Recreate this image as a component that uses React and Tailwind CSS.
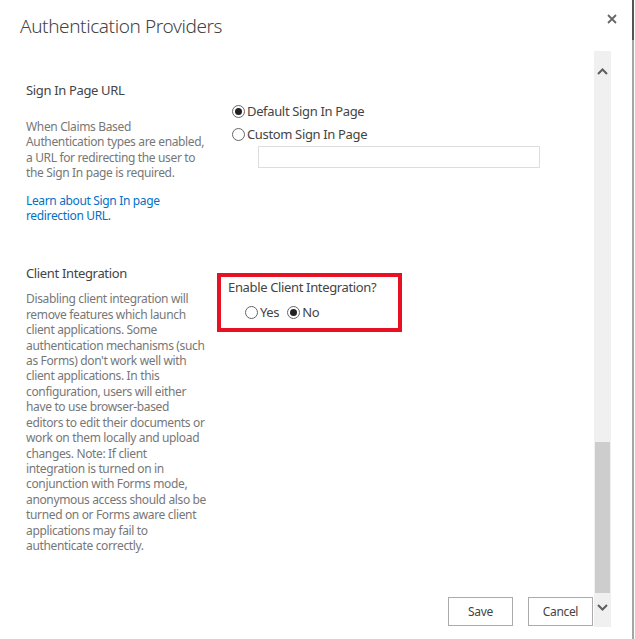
import React from "react";

const FONT = { fontFamily: '"Noto Sans", "Open Sans", Arial, sans-serif' };

function Radio({ checked }) {
  return (
    <span className="inline-flex h-[13px] w-[13px] shrink-0 items-center justify-center rounded-full border border-[#666] bg-white">
      {checked && <span className="h-[7px] w-[7px] rounded-full bg-[#222]" />}
    </span>
  );
}

function Chevron({ up }) {
  return (
    <svg width="11" height="7" viewBox="0 0 11 7">
      <path
        d={up ? "M1 6 L5.5 1.5 L10 6" : "M1 1 L5.5 5.5 L10 1"}
        fill="none"
        stroke="#5f5f5f"
        strokeWidth="2"
      />
    </svg>
  );
}

const signInLines = [
  "When Claims Based",
  "Authentication types are enabled,",
  "a URL for redirecting the user to",
  "the Sign In page is required.",
];

const clientLines = [
  "Disabling client integration will",
  "remove features which launch",
  "client applications. Some",
  "authentication mechanisms (such",
  "as Forms) don't work well with",
  "client applications. In this",
  "configuration, users will either",
  "have to use browser-based",
  "editors to edit their documents or",
  "work on them locally and upload",
  "changes. Note: If client",
  "integration is turned on in",
  "conjunction with Forms mode,",
  "anonymous access should also be",
  "turned on or Forms aware client",
  "applications may fail to",
  "authenticate correctly.",
];

export default function App() {
  return (
    <div className="flex h-[639px] w-[635px] overflow-hidden bg-white" style={FONT}>
      {/* Dialog */}
      <div className="flex w-[632px] flex-col">
        {/* Header */}
        <div className="flex h-[51px] items-start justify-between pl-5 pr-[15px]">
          <h1 className="pt-[12px] text-[19px] font-light leading-[28px] tracking-[-0.4px] text-[#444]">
            Authentication Providers
          </h1>
          <svg className="mt-[14px]" width="10" height="10" viewBox="0 0 10 10">
            <path d="M1 1 L9 9 M9 1 L1 9" stroke="#666" strokeWidth="1.8" />
          </svg>
        </div>

        {/* Body */}
        <div className="flex h-[576px] tracking-[-0.35px]">
          {/* Content */}
          <div className="flex w-[594px] flex-col">
            {/* Sign In Page URL */}
            <div className="mt-[30px] flex">
              <div className="w-[206px] shrink-0 whitespace-nowrap pl-[26px]">
                <div className="text-[13px] leading-[18px] text-[#444]">Sign In Page URL</div>
                <div className="mt-[20px] text-[12px] leading-[15.4px] text-[#777]">
                  {signInLines.map((l) => (
                    <div key={l}>{l}</div>
                  ))}
                </div>
                <div className="mt-[12px] text-[12px] leading-[15.4px] text-[#0072c6]">
                  <div>Learn about Sign In page</div>
                  <div>redirection URL.</div>
                </div>
              </div>
              <div className="mt-[19px] pl-[26px] text-[13px] leading-[23px] text-[#444]">
                <label className="flex items-center gap-[2px]">
                  <Radio checked />
                  Default Sign In Page
                </label>
                <label className="flex items-center gap-[2px]">
                  <Radio />
                  Custom Sign In Page
                </label>
                <div className="ml-[26px] h-[22px] w-[282px] border border-[#ddd] bg-white" />
              </div>
            </div>

            {/* Client Integration */}
            <div className="mt-[41px] flex">
              <div className="w-[206px] shrink-0 whitespace-nowrap pl-[26px]">
                <div className="text-[13px] leading-[18px] text-[#444]">Client Integration</div>
                <div className="mt-[9px] text-[12px] leading-[15.4px] text-[#777]">
                  {clientLines.map((l) => (
                    <div key={l}>{l}</div>
                  ))}
                </div>
              </div>
              <div className="ml-[11px] mt-[9px]">
                <div className="w-[185px] border-4 border-[#e81123] pb-[5px] pl-[7px] pt-px text-[13px] text-[#444]">
                  <div className="leading-[18px]">Enable Client Integration?</div>
                  <div className="ml-[17px] mt-[5px] flex items-center leading-[22px]">
                    <label className="flex items-center gap-[2px]">
                      <Radio />
                      Yes
                    </label>
                    <label className="ml-[8px] flex items-center gap-[2px]">
                      <Radio checked />
                      No
                    </label>
                  </div>
                </div>
              </div>
            </div>

            {/* Actions */}
            <div className="mt-auto mb-px flex justify-end gap-[15px] pr-px">
              <button className="h-[29px] w-[65px] border border-[#ababab] bg-white text-[12px] text-[#444]">
                Save
              </button>
              <button className="h-[29px] w-[65px] border border-[#ababab] bg-white text-[12px] text-[#444]">
                Cancel
              </button>
            </div>
          </div>

          {/* Scrollbar */}
          <div className="flex w-[17px] flex-col bg-[#f0f0f0]">
            <div className="flex h-[38px] items-center justify-center pt-[3px]">
              <Chevron up />
            </div>
            <div className="flex-1" />
            <div className="mx-px h-[151px] bg-[#cdcdcd]" />
            <div className="flex h-[34px] items-start justify-center pt-[11px]">
              <Chevron />
            </div>
          </div>
          <div className="w-[21px]" />
        </div>
      </div>

      {/* Window edge */}
      <div className="flex w-[3px] flex-col">
        <div className="h-[40px] w-[2px] bg-[#555]" />
        <div className="w-[2px] flex-1 bg-[#a6a6a6]" />
      </div>
    </div>
  );
}
